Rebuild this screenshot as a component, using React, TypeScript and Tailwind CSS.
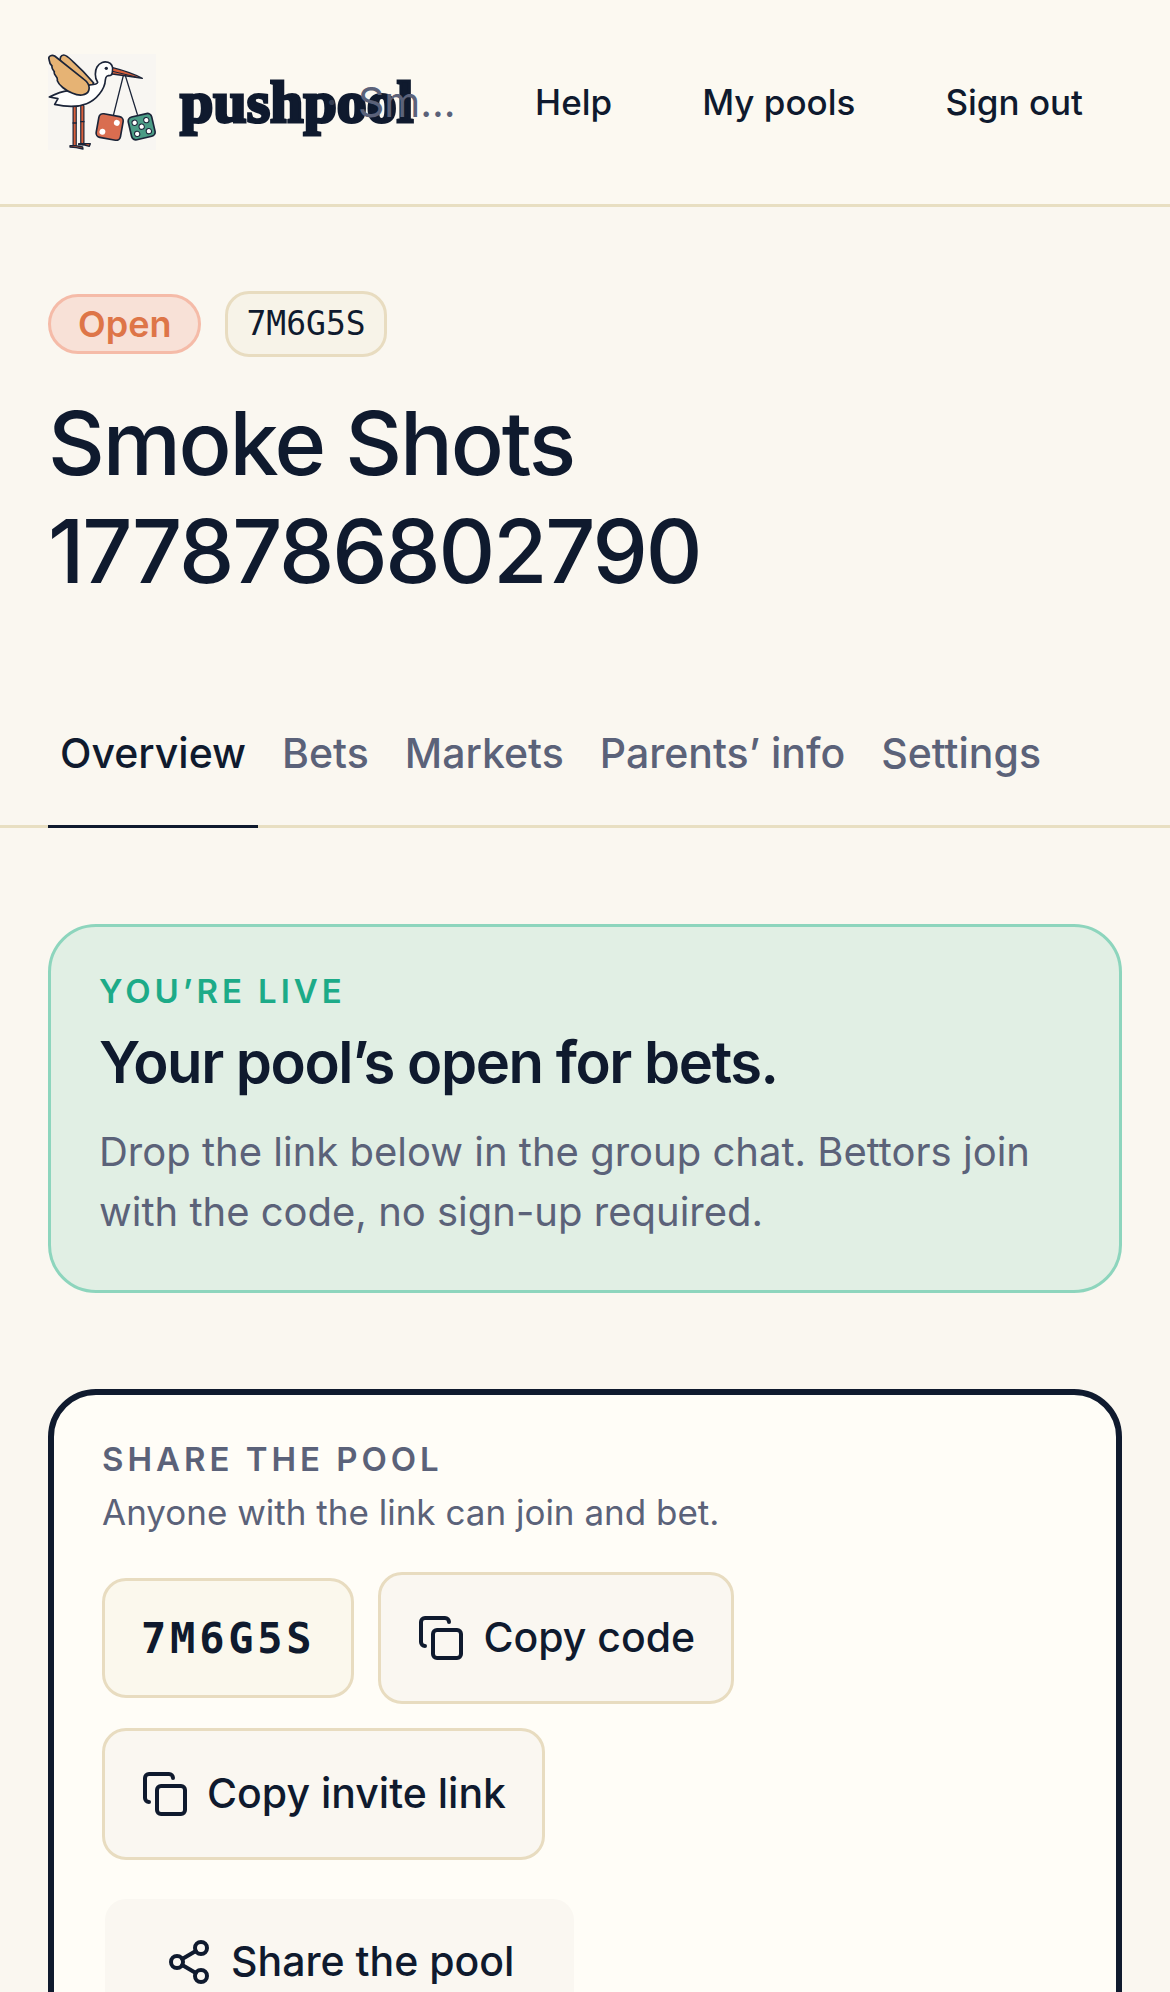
import { Copy, Share2 } from "lucide-react";

const POOL_NAME = "Smoke Shots 1778786802790";
const POOL_CODE = "7M6G5S";

const tabs = ["Overview", "Bets", "Markets", "Parents’ info", "Settings"];
const navItems = ["Help", "My pools", "Sign out"];

function StorkLogo() {
  return (
    <svg
      viewBox="24 27 324 288"
      className="h-24 w-[108px] shrink-0"
      fill="none"
      stroke="#1b2438"
      strokeWidth="5"
      strokeLinecap="round"
      strokeLinejoin="round"
      aria-hidden="true"
    >
      <rect x="24" y="27" width="324" height="288" fill="#f8f6f2" stroke="none" />
      {/* legs */}
      <path d="M104 186v116M127 184v110" stroke="#1b2438" strokeWidth="13" />
      <path d="M104 186v114M127 184v108" stroke="#d9603b" strokeWidth="6" />
      <path d="M99 234h10M122 230h10" strokeWidth="4" />
      <path d="M90 302h16l22 4 1 6-20-4-19-2zM116 296h14l21 0-3 8-14-4-18-1z" fill="#d9603b" strokeWidth="4" />
      {/* far wing */}
      <path d="M62 50c-4-10 0-20 9-20 9 0 18 10 28 20 20 18 45 44 62 64-2 6-9 8-17 7z" fill="#e6b374" />
      {/* body and head */}
      <path
        d="M150 120c12-1 22-4 23-8-10-14-8-36-2-46 8-14 22-18 33-14 11 4 15 14 14 25 0 8 0 12-6 14-10 0-15 2-16 14-1 28-28 61-56 71-30 12-66 9-96 2l10-17-26-5c16-8 32-16 58-19z"
        fill="#fefefd"
      />
      {/* near wing */}
      <path
        d="M27 42c-3-8 8-14 17-9l88 70c12 9 18 22 14 34-6 16-30 16-48 8-22-8-42-26-46-38 0-6 1-7-3-12-5-7-8-9-6-15-5-6-9-10-7-17-8-7-8-12-9-21z"
        fill="#e6b374"
      />
      <circle cx="199" cy="70" r="5" fill="#1b2438" stroke="none" />
      {/* beak */}
      <path d="M218 68c28 7 60 17 89 32-32-5-60-9-90-13z" fill="#d9603b" strokeWidth="4" />
      <path d="M218 79l70 17" strokeWidth="3" />
      {/* strings */}
      <path d="M250 92l-30 120M256 92l36 116" strokeWidth="4" />
      {/* dice */}
      <g transform="rotate(10 209 246)">
        <rect x="172" y="210" width="74" height="72" rx="13" fill="#d96d50" />
        <g fill="#fff" stroke="none">
          <circle cx="228" cy="230" r="9" />
          <circle cx="190" cy="264" r="9" />
        </g>
      </g>
      <g transform="rotate(-13 305 245)">
        <rect x="269" y="210" width="72" height="70" rx="13" fill="#4b9c86" />
        <g fill="#fff" strokeWidth="3">
          <circle cx="287" cy="229" r="8" />
          <circle cx="323" cy="229" r="8" />
          <circle cx="305" cy="245" r="8" />
          <circle cx="287" cy="263" r="8" />
          <circle cx="323" cy="263" r="8" />
        </g>
      </g>
    </svg>
  );
}

function Header() {
  return (
    <header className="flex items-center border-b-3 border-[#e8dfc2] bg-[#fcf9f1] px-12 py-[54px]">
      <div className="flex min-w-0 flex-1 items-center">
        {/* The wordmark is wider than its slot and runs under the breadcrumb */}
        <a href="#home" className="flex w-[274px] shrink-0 items-center gap-6">
          <StorkLogo />
          <span className="font-['Liberation_Serif',serif] text-[60px] leading-none font-bold text-[#0f1a2e] [-webkit-text-stroke:3px_#0f1a2e]">
            pushpool
          </span>
        </a>
        <span className="relative w-9 shrink-0 pl-1 text-[40px] leading-[60px] text-[#5b6279]/50">·</span>
        <span title={POOL_NAME} className="relative shrink-0 text-[41px] leading-[60px] text-[#5b6279]">
          Sm...
        </span>
      </div>
      <nav className="flex shrink-0 gap-3">
        {navItems.map((item) => (
          <button key={item} type="button" className="rounded-3xl px-[39px] text-[35px] leading-[60px] font-medium">
            {item}
          </button>
        ))}
      </nav>
    </header>
  );
}

function Tabs() {
  return (
    <nav className="mt-[88px] flex gap-3 border-b-3 border-[#e8dfc2] px-12">
      {tabs.map((tab, i) => (
        <a
          key={tab}
          href={`#tab-${i}`}
          aria-current={i === 0 ? "page" : undefined}
          className={
            i === 0
              ? "-mb-[3px] border-b-3 border-[#0f1a2e] px-3 pt-[30px] pb-[42px] text-[41px] leading-[60px] font-medium text-[#0f1a2e]"
              : "px-3 pt-[30px] pb-[42px] text-[41px] leading-[60px] font-medium text-[#5b6279]"
          }
        >
          {tab}
        </a>
      ))}
    </nav>
  );
}

function CopyButton({ label }: { label: string }) {
  return (
    <button
      type="button"
      className="flex h-[132px] items-center gap-[18px] rounded-3xl border-3 border-[#e8dcc0] bg-[#faf7f1] px-9 text-[41px] font-medium"
    >
      <Copy size={48} aria-hidden="true" />
      {label}
    </button>
  );
}

export default function App() {
  return (
    <div className="min-h-screen bg-[#faf7f0] font-['Inter',sans-serif] text-[#0f1a2e]">
      <Header />

      <section className="px-12 pt-[84px]">
        <div className="flex items-center gap-6">
          <span className="rounded-full border-3 border-[#f5bba8] bg-[#f8e1d7] px-[27px] py-[3px] text-[36px] leading-[48px] font-semibold text-[#de7548]">
            Open
          </span>
          <span className="rounded-3xl border-3 border-[#e8dcc0] bg-[#f7f3e8] px-[18px] py-1.5 font-['DejaVu_Sans_Mono',monospace] text-[33px] leading-[48px]">
            {POOL_CODE}
          </span>
        </div>
        <h1 className="mt-8 max-w-[900px] text-[88px] leading-[108px] font-medium tracking-tight">{POOL_NAME}</h1>
      </section>

      <Tabs />

      <main className="flex flex-col gap-24 px-12 py-24">
        <section className="rounded-[48px] border-3 border-[#8dd5bd] bg-[#e1efe4] p-12">
          <p className="text-[33px] leading-[33px] font-semibold tracking-[0.12em] text-[#1dab88] uppercase">
            You’re live
          </p>
          <h2 className="mt-[18px] text-[58px] leading-[72px] font-semibold tracking-tight">
            Your pool’s open for bets.
          </h2>
          <p className="mt-6 text-[40px] leading-[60px] text-[#5b6279]">
            Drop the link below in the group chat. Bettors join with the code, no sign-up required.
          </p>
        </section>

        <section className="rounded-[48px] border-6 border-[#0f1a2e] bg-[#fffdf7] p-12">
          <h2 className="text-[33px] leading-[33px] font-semibold tracking-[0.12em] text-[#5b6279] uppercase">
            Share the pool
          </h2>
          <p className="mt-3 text-[35px] leading-[48px] text-[#5b6279]">Anyone with the link can join and bet.</p>
          <div className="mt-9 flex flex-wrap items-center gap-6">
            <span className="flex h-[120px] items-center rounded-3xl border-3 border-[#e8dcc0] bg-[#fbf8ed] px-9 font-['DejaVu_Sans_Mono',monospace] text-[42px] font-bold tracking-[0.09em]">
              {POOL_CODE}
            </span>
            <CopyButton label="Copy code" />
            <CopyButton label="Copy invite link" />
          </div>
          <button
            type="button"
            className="mt-9 flex h-[132px] items-center gap-[18px] rounded-3xl border-3 border-transparent bg-[#faf7f1] bg-clip-padding px-15 text-[41px] font-medium"
          >
            <Share2 size={48} aria-hidden="true" />
            Share the pool
          </button>
        </section>
      </main>
    </div>
  );
}
